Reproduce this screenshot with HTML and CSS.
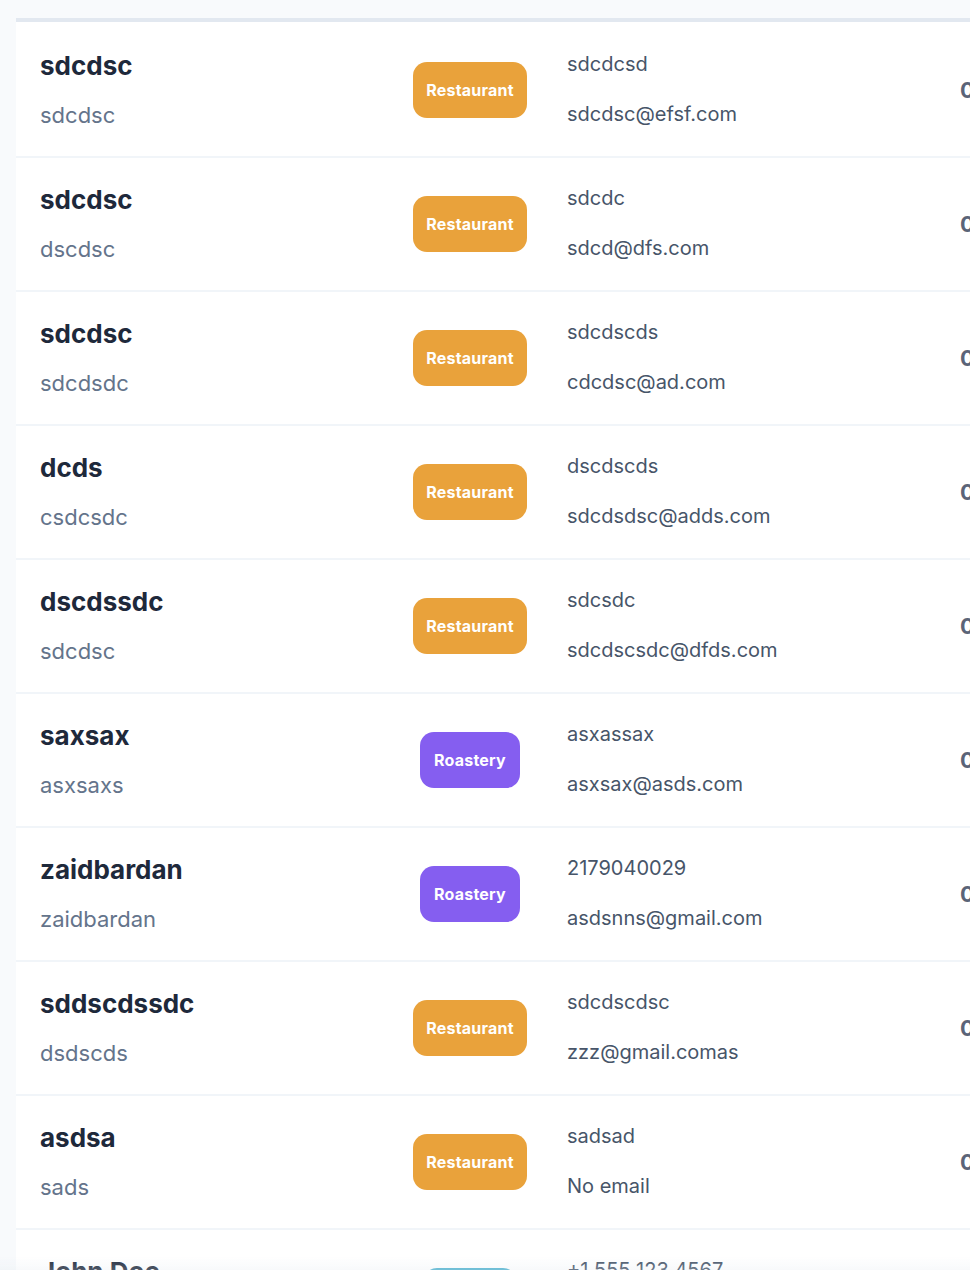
FILE: index.html
```html
<!DOCTYPE html>
<html lang="en">
<head>
<meta charset="utf-8">
<title>Customers</title>
<link rel="stylesheet" href="styles.css">
</head>
<body>
<div class="page">
  <div class="card">
    <div class="row">
      <div class="cell name-cell"><div class="name">sdcdsc</div><div class="sub">sdcdsc</div></div>
      <div class="cell badge-cell"><span class="badge restaurant">Restaurant</span></div>
      <div class="cell contact-cell"><div class="line">sdcdcsd</div><div class="line">sdcdsc@efsf.com</div></div>
      <div class="cell num-cell">0</div>
    </div>
    <div class="row">
      <div class="cell name-cell"><div class="name">sdcdsc</div><div class="sub">dscdsc</div></div>
      <div class="cell badge-cell"><span class="badge restaurant">Restaurant</span></div>
      <div class="cell contact-cell"><div class="line">sdcdc</div><div class="line">sdcd@dfs.com</div></div>
      <div class="cell num-cell">0</div>
    </div>
    <div class="row">
      <div class="cell name-cell"><div class="name">sdcdsc</div><div class="sub">sdcdsdc</div></div>
      <div class="cell badge-cell"><span class="badge restaurant">Restaurant</span></div>
      <div class="cell contact-cell"><div class="line">sdcdscds</div><div class="line">cdcdsc@ad.com</div></div>
      <div class="cell num-cell">0</div>
    </div>
    <div class="row">
      <div class="cell name-cell"><div class="name">dcds</div><div class="sub">csdcsdc</div></div>
      <div class="cell badge-cell"><span class="badge restaurant">Restaurant</span></div>
      <div class="cell contact-cell"><div class="line">dscdscds</div><div class="line">sdcdsdsc@adds.com</div></div>
      <div class="cell num-cell">0</div>
    </div>
    <div class="row">
      <div class="cell name-cell"><div class="name">dscdssdc</div><div class="sub">sdcdsc</div></div>
      <div class="cell badge-cell"><span class="badge restaurant">Restaurant</span></div>
      <div class="cell contact-cell"><div class="line">sdcsdc</div><div class="line">sdcdscsdc@dfds.com</div></div>
      <div class="cell num-cell">0</div>
    </div>
    <div class="row">
      <div class="cell name-cell"><div class="name">saxsax</div><div class="sub">asxsaxs</div></div>
      <div class="cell badge-cell"><span class="badge roastery">Roastery</span></div>
      <div class="cell contact-cell"><div class="line">asxassax</div><div class="line">asxsax@asds.com</div></div>
      <div class="cell num-cell">0</div>
    </div>
    <div class="row">
      <div class="cell name-cell"><div class="name">zaidbardan</div><div class="sub">zaidbardan</div></div>
      <div class="cell badge-cell"><span class="badge roastery">Roastery</span></div>
      <div class="cell contact-cell"><div class="line">2179040029</div><div class="line">asdsnns@gmail.com</div></div>
      <div class="cell num-cell">0</div>
    </div>
    <div class="row">
      <div class="cell name-cell"><div class="name">sddscdssdc</div><div class="sub">dsdscds</div></div>
      <div class="cell badge-cell"><span class="badge restaurant">Restaurant</span></div>
      <div class="cell contact-cell"><div class="line">sdcdscdsc</div><div class="line">zzz@gmail.comas</div></div>
      <div class="cell num-cell">0</div>
    </div>
    <div class="row">
      <div class="cell name-cell"><div class="name">asdsa</div><div class="sub">sads</div></div>
      <div class="cell badge-cell"><span class="badge restaurant">Restaurant</span></div>
      <div class="cell contact-cell"><div class="line">sadsad</div><div class="line">No email</div></div>
      <div class="cell num-cell">0</div>
    </div>
    <div class="row">
      <div class="cell name-cell"><div class="name">John Doe</div><div class="sub">Doe Coffee</div></div>
      <div class="cell badge-cell"><span class="badge supplier">Supplier</span></div>
      <div class="cell contact-cell"><div class="line">+1 555 123 4567</div><div class="line">john@doe.com</div></div>
      <div class="cell num-cell">0</div>
    </div>
  </div>
</div>
<div class="bottom-fade"></div>
</body>
</html>
```

FILE: styles.css
```css
html, body {
  margin: 0;
  padding: 0;
  height: 100%;
  overflow: hidden;
}

body {
  background: #f8fafc;
  font-family: Inter, "Noto Sans", "Liberation Sans", sans-serif;
  -webkit-font-smoothing: antialiased;
}

.page {
  padding: 18px 0 0 16px;
}

.card {
  width: 1100px;
  background: #ffffff;
  border-top: 4px solid #e2e8f0;
  padding-top: 2px;
}

.row {
  display: grid;
  grid-template-columns: 384px 140px 400px 1fr;
  height: 132px;
  border-bottom: 2px solid #f1f5f9;
}

.cell {
  display: flex;
  flex-direction: column;
  justify-content: center;
}

.name-cell {
  padding-left: 24px;
  gap: 17px;
}

.name {
  font-size: 26px;
  line-height: 32px;
  font-weight: 700;
  color: #1e293b;
}

.sub {
  font-size: 22px;
  line-height: 32px;
  color: #64748b;
}

.badge-cell {
  align-items: center;
}

.badge {
  display: inline-flex;
  align-items: center;
  height: 56px;
  padding: 0 13px;
  border-radius: 14px;
  color: #ffffff;
  font-size: 16px;
  font-weight: 700;
  letter-spacing: 0.2px;
  box-sizing: border-box;
}

.restaurant { background: #e9a23b; }
.roastery { background: #855ef0; padding: 0 14px; }
.supplier { background: #4fb3d0; padding: 0 14px; }

.contact-cell {
  padding-left: 27px;
  padding-bottom: 2px;
  gap: 20px;
}

.line {
  font-size: 20px;
  line-height: 30px;
  color: #475569;
}

.num-cell {
  padding-left: 20px;
  font-size: 22px;
  font-weight: 700;
  color: #5b6478;
}

.bottom-fade {
  position: fixed;
  left: 0;
  right: 0;
  bottom: 0;
  height: 14px;
  background: linear-gradient(to bottom, rgba(226, 232, 240, 0), rgba(226, 232, 240, 0.25));
  pointer-events: none;
}
```
